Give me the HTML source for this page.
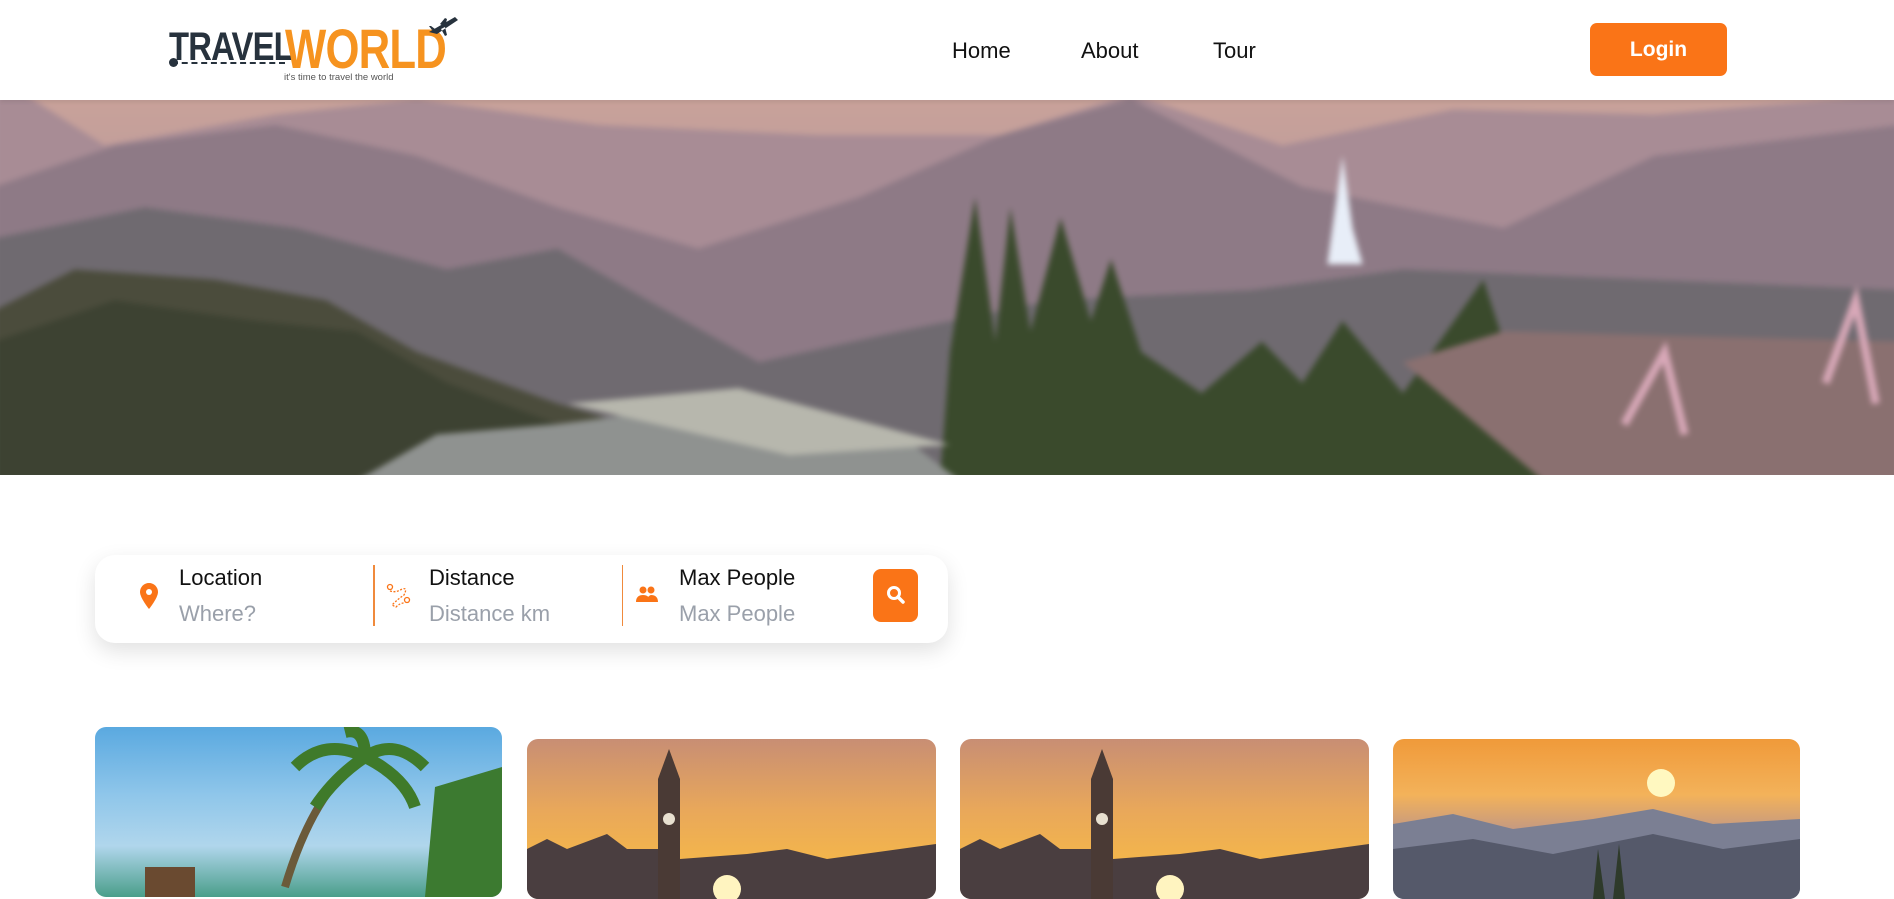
<!DOCTYPE html>
<html><head><meta charset="utf-8"><style>
*{margin:0;padding:0;box-sizing:border-box}
body{width:1894px;height:886px;overflow:hidden;background:#fff;font-family:"Liberation Sans",sans-serif;position:relative}
.hdr{position:absolute;left:0;top:0;width:1894px;height:100px;background:#fff;box-shadow:0 2px 4px rgba(0,0,0,.08);z-index:2}
.nav a{position:absolute;top:38px;font-size:22px;color:#111;text-decoration:none}
.login{position:absolute;left:1590px;top:23px;width:137px;height:53px;background:#fa7417;border-radius:7px;color:#fff;font-size:21px;font-weight:bold;text-align:center;line-height:53px}
.hero{position:absolute;left:0;top:100px;width:1894px;height:375px;overflow:hidden}
.hero svg{filter:blur(3px);margin:-6px;width:1906px;height:387px}
.search{position:absolute;left:95px;top:555px;width:853px;height:88px;background:#fff;border-radius:20px;box-shadow:0 8px 22px rgba(0,0,0,.12)}
.t{position:absolute;font-size:22px;color:#111}
.p{position:absolute;font-size:22px;color:#9aa0aa}
.div{position:absolute;top:10px;width:2px;height:61px;background:#f08a3c}
.sbtn{position:absolute;left:778px;top:14px;width:45px;height:53px;background:#fa7417;border-radius:8px}
.card{position:absolute;border-radius:11px;overflow:hidden}
</style></head><body>
<div class="hdr">
  <div style="position:absolute;left:169px;top:14px;width:290px;height:70px">
    <div style="position:absolute;left:0;top:11px;font-size:40px;font-weight:bold;color:#27323d;letter-spacing:-1px;transform:scaleX(.82);transform-origin:left">TRAVEL</div>
    <div style="position:absolute;left:116px;top:2px;font-size:56px;font-weight:bold;color:#f6931f;letter-spacing:-1px;transform:scaleX(.78);transform-origin:left">WORLD</div>
    <div style="position:absolute;left:3px;top:48px;width:113px;border-top:2px dashed #27323d"></div>
    <div style="position:absolute;left:0;top:44px;width:9px;height:9px;border-radius:50%;background:#27323d"></div>
    <div style="position:absolute;left:115px;top:58px;font-size:9.5px;color:#555">it's time to travel the world</div>
    <svg style="position:absolute;left:258px;top:0" width="32" height="26" viewBox="0 0 32 26"><path d="M2 18 L28 3 L31 6 L10 20 Z M13 10 L18 4 L20 5 L18 13 Z M14 15 L18 22 L20 21 L18 13 Z M5 16 L2 12 L4 12 L8 15 Z" fill="#27323d"/></svg>
  </div>
  <div class="nav"><a style="left:952px">Home</a><a style="left:1081px">About</a><a style="left:1213px">Tour</a></div>
  <div class="login">Login</div>
</div>
<div class="hero">
<svg viewBox="0 0 1894 375" preserveAspectRatio="none">
<defs><linearGradient id="sky" x1="0" y1="0" x2="0" y2="1"><stop offset="0" stop-color="#c9a29a"/><stop offset="1" stop-color="#9c8a9c"/></linearGradient></defs>
<rect width="1894" height="375" fill="url(#sky)"/>
<path d="M0 0 L30 0 L110 50 L280 20 L420 5 L600 30 L820 40 L1000 40 L1130 0 L1280 50 L1450 15 L1650 20 L1894 0 L1894 375 L0 375Z" fill="#a88c95"/>
<path d="M0 90 L120 50 L280 30 L420 60 L560 110 L700 150 L860 100 L1000 40 L1130 5 L1300 90 L1500 130 L1650 60 L1894 30 L1894 375 L0 375Z" fill="#8e7a86"/>
<path d="M0 140 L150 110 L300 130 L450 170 L560 150 L650 200 L760 260 L900 230 L1050 200 L1250 190 L1400 170 L1894 190 L1894 375 L0 375Z" fill="#6f6a70"/>
<path d="M0 210 L80 170 L220 180 L330 200 L420 250 L560 300 L700 340 L800 375 L0 375Z" fill="#4b4c3c"/>
<path d="M0 240 L120 200 L260 220 L360 230 L450 280 L560 320 L620 375 L0 375Z" fill="#3d4232"/>
<path d="M940 375 L950 250 L975 100 L995 240 L1010 110 L1030 230 L1060 120 L1090 220 L1110 160 L1140 250 L1200 290 L1260 240 L1300 280 L1340 220 L1400 290 L1480 180 L1520 300 L1540 375Z" fill="#3a4a2c"/>
<path d="M1400 260 L1500 230 L1894 240 L1894 375 L1540 375Z" fill="#8a7070"/>
<path d="M1330 130 L1340 60 L1350 130 L1360 165 L1325 165Z" fill="#e8eef8"/>
<path d="M360 375 L440 330 L560 320 L720 300 L900 330 L960 375Z" fill="#8f9290"/>
<path d="M570 300 L740 285 L950 340 L790 350Z" fill="#b7b7ad"/>
<path d="M1620 320 L1660 250 L1680 330 M1820 280 L1850 200 L1870 300" stroke="#d8a8b8" stroke-width="8" fill="none"/>
</svg>
</div>
<div class="search">
  <svg style="position:absolute;left:45px;top:28px" width="18" height="26" viewBox="0 0 18 26"><path d="M9 0C4 0 0 4 0 9c0 6 9 17 9 17s9-11 9-17c0-5-4-9-9-9z" fill="#fa7417"/><circle cx="9" cy="9" r="3" fill="#fff"/></svg>
  <div class="t" style="left:84px;top:10px">Location</div><div class="p" style="left:84px;top:46px">Where?</div>
  <div class="div" style="left:278px"></div>
  <svg style="position:absolute;left:291px;top:28px" width="26" height="26" viewBox="0 0 26 26" fill="none" stroke="#fa7417" stroke-width="1.3"><circle cx="4" cy="4" r="2.5"/><circle cx="21" cy="17" r="2.5"/><path d="M4 8 Q10 10 16 6 Q22 4 18 12 Q12 16 6 22 L10 24 Q14 20 18 20" stroke-dasharray="2 1.5"/></svg>
  <div class="t" style="left:334px;top:10px">Distance</div><div class="p" style="left:334px;top:46px">Distance km</div>
  <div class="div" style="left:527px;width:1px"></div>
  <svg style="position:absolute;left:541px;top:31px" width="22" height="18" viewBox="0 0 22 18" fill="#fa7417"><circle cx="7" cy="4" r="3.5"/><circle cx="15" cy="4" r="3.5"/><path d="M0 16c0-5 3-7 7-7s7 2 7 7zM11 16c0-4 1-6 4-7 4 0 7 2 7 7z"/></svg>
  <div class="t" style="left:584px;top:10px">Max People</div><div class="p" style="left:584px;top:46px">Max People</div>
  <div class="sbtn"><svg style="position:absolute;left:13px;top:16px" width="20" height="20" viewBox="0 0 20 20"><circle cx="8" cy="8" r="5.5" fill="none" stroke="#fff" stroke-width="3"/><path d="M12 12 L17 17" stroke="#fff" stroke-width="3.5" stroke-linecap="round"/></svg></div>
</div>
<div class="card" style="left:95px;top:727px;width:407px;height:170px;background:linear-gradient(180deg,#5aa9e0 0%,#8fc6ea 40%,#b0d6ec 70%,#4a9e8a 100%)">
  <svg width="407" height="170"><path d="M270 30 Q220 60 190 160" stroke="#6b5a3a" stroke-width="8" fill="none"/><path d="M270 30 Q230 10 200 40 M270 30 Q300 10 330 40 M270 30 Q240 50 220 80 M270 30 Q310 50 320 80 M270 30 Q270 0 250 5" stroke="#3f7a2a" stroke-width="12" fill="none"/><path d="M340 60 L407 40 L407 170 L330 170Z" fill="#3c7a30"/><rect x="50" y="140" width="50" height="30" fill="#6a4a30"/></svg>
</div>
<div class="card" style="left:527px;top:739px;width:409px;height:160px;background:linear-gradient(180deg,#c88e74 0%,#e9a85a 45%,#f3b54c 75%,#7a5a4a 100%)">
  <svg width="409" height="160"><rect x="131" y="40" width="22" height="120" fill="#4a3a35"/><path d="M131 40 L142 10 L153 40Z" fill="#4a3a35"/><circle cx="142" cy="80" r="6" fill="#e8e0d0"/><path d="M0 160 L0 110 L20 100 L40 110 L80 95 L100 110 L131 110 L131 160Z M153 160 L153 120 L220 115 L260 110 L300 120 L409 105 L409 160Z" fill="#4a3e40"/><circle cx="200" cy="150" r="14" fill="#fff4c0"/></svg>
</div>
<div class="card" style="left:960px;top:739px;width:409px;height:160px;background:linear-gradient(180deg,#c88e74 0%,#e9a85a 45%,#f3b54c 75%,#7a5a4a 100%)">
  <svg width="409" height="160"><rect x="131" y="40" width="22" height="120" fill="#4a3a35"/><path d="M131 40 L142 10 L153 40Z" fill="#4a3a35"/><circle cx="142" cy="80" r="6" fill="#e8e0d0"/><path d="M0 160 L0 110 L20 100 L40 110 L80 95 L100 110 L131 110 L131 160Z M153 160 L153 120 L220 115 L260 110 L300 120 L409 105 L409 160Z" fill="#4a3e40"/><circle cx="210" cy="150" r="14" fill="#fff4c0"/></svg>
</div>
<div class="card" style="left:1393px;top:739px;width:407px;height:160px;background:linear-gradient(180deg,#f09a3a 0%,#f3b25a 35%,#b39090 65%,#6c7486 100%)">
  <svg width="407" height="160"><circle cx="268" cy="44" r="14" fill="#fff8c0"/><path d="M0 85 L60 75 L120 90 L200 80 L260 70 L320 85 L407 80 L407 160 L0 160Z" fill="#7b7f93"/><path d="M0 110 L80 100 L160 115 L260 95 L330 110 L407 100 L407 160 L0 160Z" fill="#55596a"/><path d="M200 160 L205 110 L212 160 M220 160 L226 105 L232 160" fill="#2e3a2a"/></svg>
</div>
</body></html>
